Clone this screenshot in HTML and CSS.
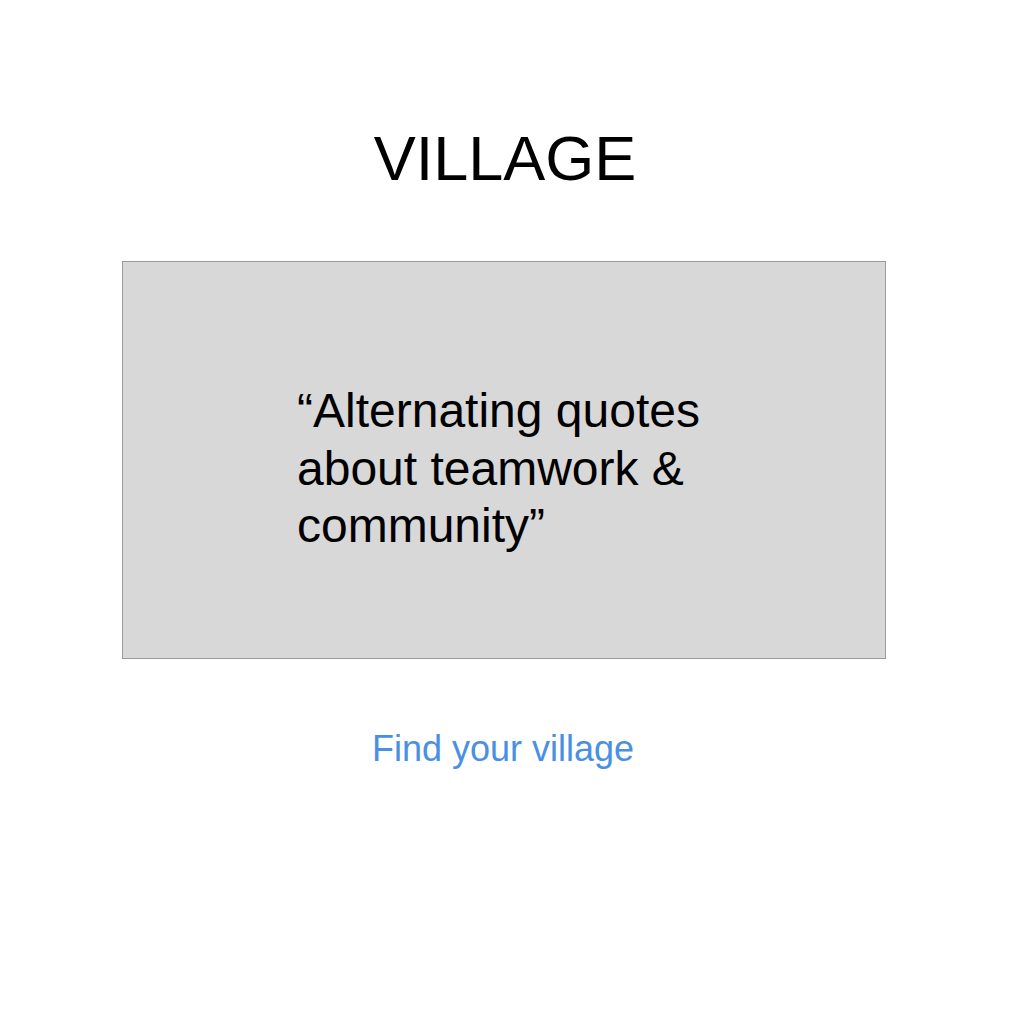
FILE: index.html
```html
<!DOCTYPE html>
<html lang="en">
<head>
<meta charset="utf-8">
<title>Village</title>
<link rel="stylesheet" href="styles.css">
</head>
<body>
  <main class="page">
    <h1 class="title">VILLAGE</h1>
    <section class="quote-box">
      <p class="quote">“Alternating quotes about teamwork &amp; community”</p>
    </section>
    <a class="cta" href="#">Find your village</a>
  </main>
</body>
</html>
```

FILE: styles.css
```css
html, body {
  margin: 0;
  padding: 0;
  background: #ffffff;
}

body {
  font-family: "Liberation Sans", Arial, Helvetica, sans-serif;
  color: #000000;
}

.page {
  width: 764px;
  margin-left: 122px;
  padding-top: 127px;
  display: flex;
  flex-direction: column;
  align-items: center;
}

.title {
  margin: 0;
  font-size: 63px;
  line-height: 63px;
  font-weight: 400;
  padding-left: 2px;
}

.quote-box {
  box-sizing: border-box;
  align-self: stretch;
  margin-top: 71px;
  height: 398px;
  background: #d8d8d8;
  border: 1px solid #9b9b9b;
  padding: 120px 0 0 174px;
}

.quote {
  margin: 0;
  width: 420px;
  font-size: 48px;
  line-height: 57.6px;
}

.cta {
  margin-top: 68px;
  padding-right: 2px;
  font-size: 36px;
  line-height: 43px;
  color: #4a90e2;
  text-decoration: none;
}
```
